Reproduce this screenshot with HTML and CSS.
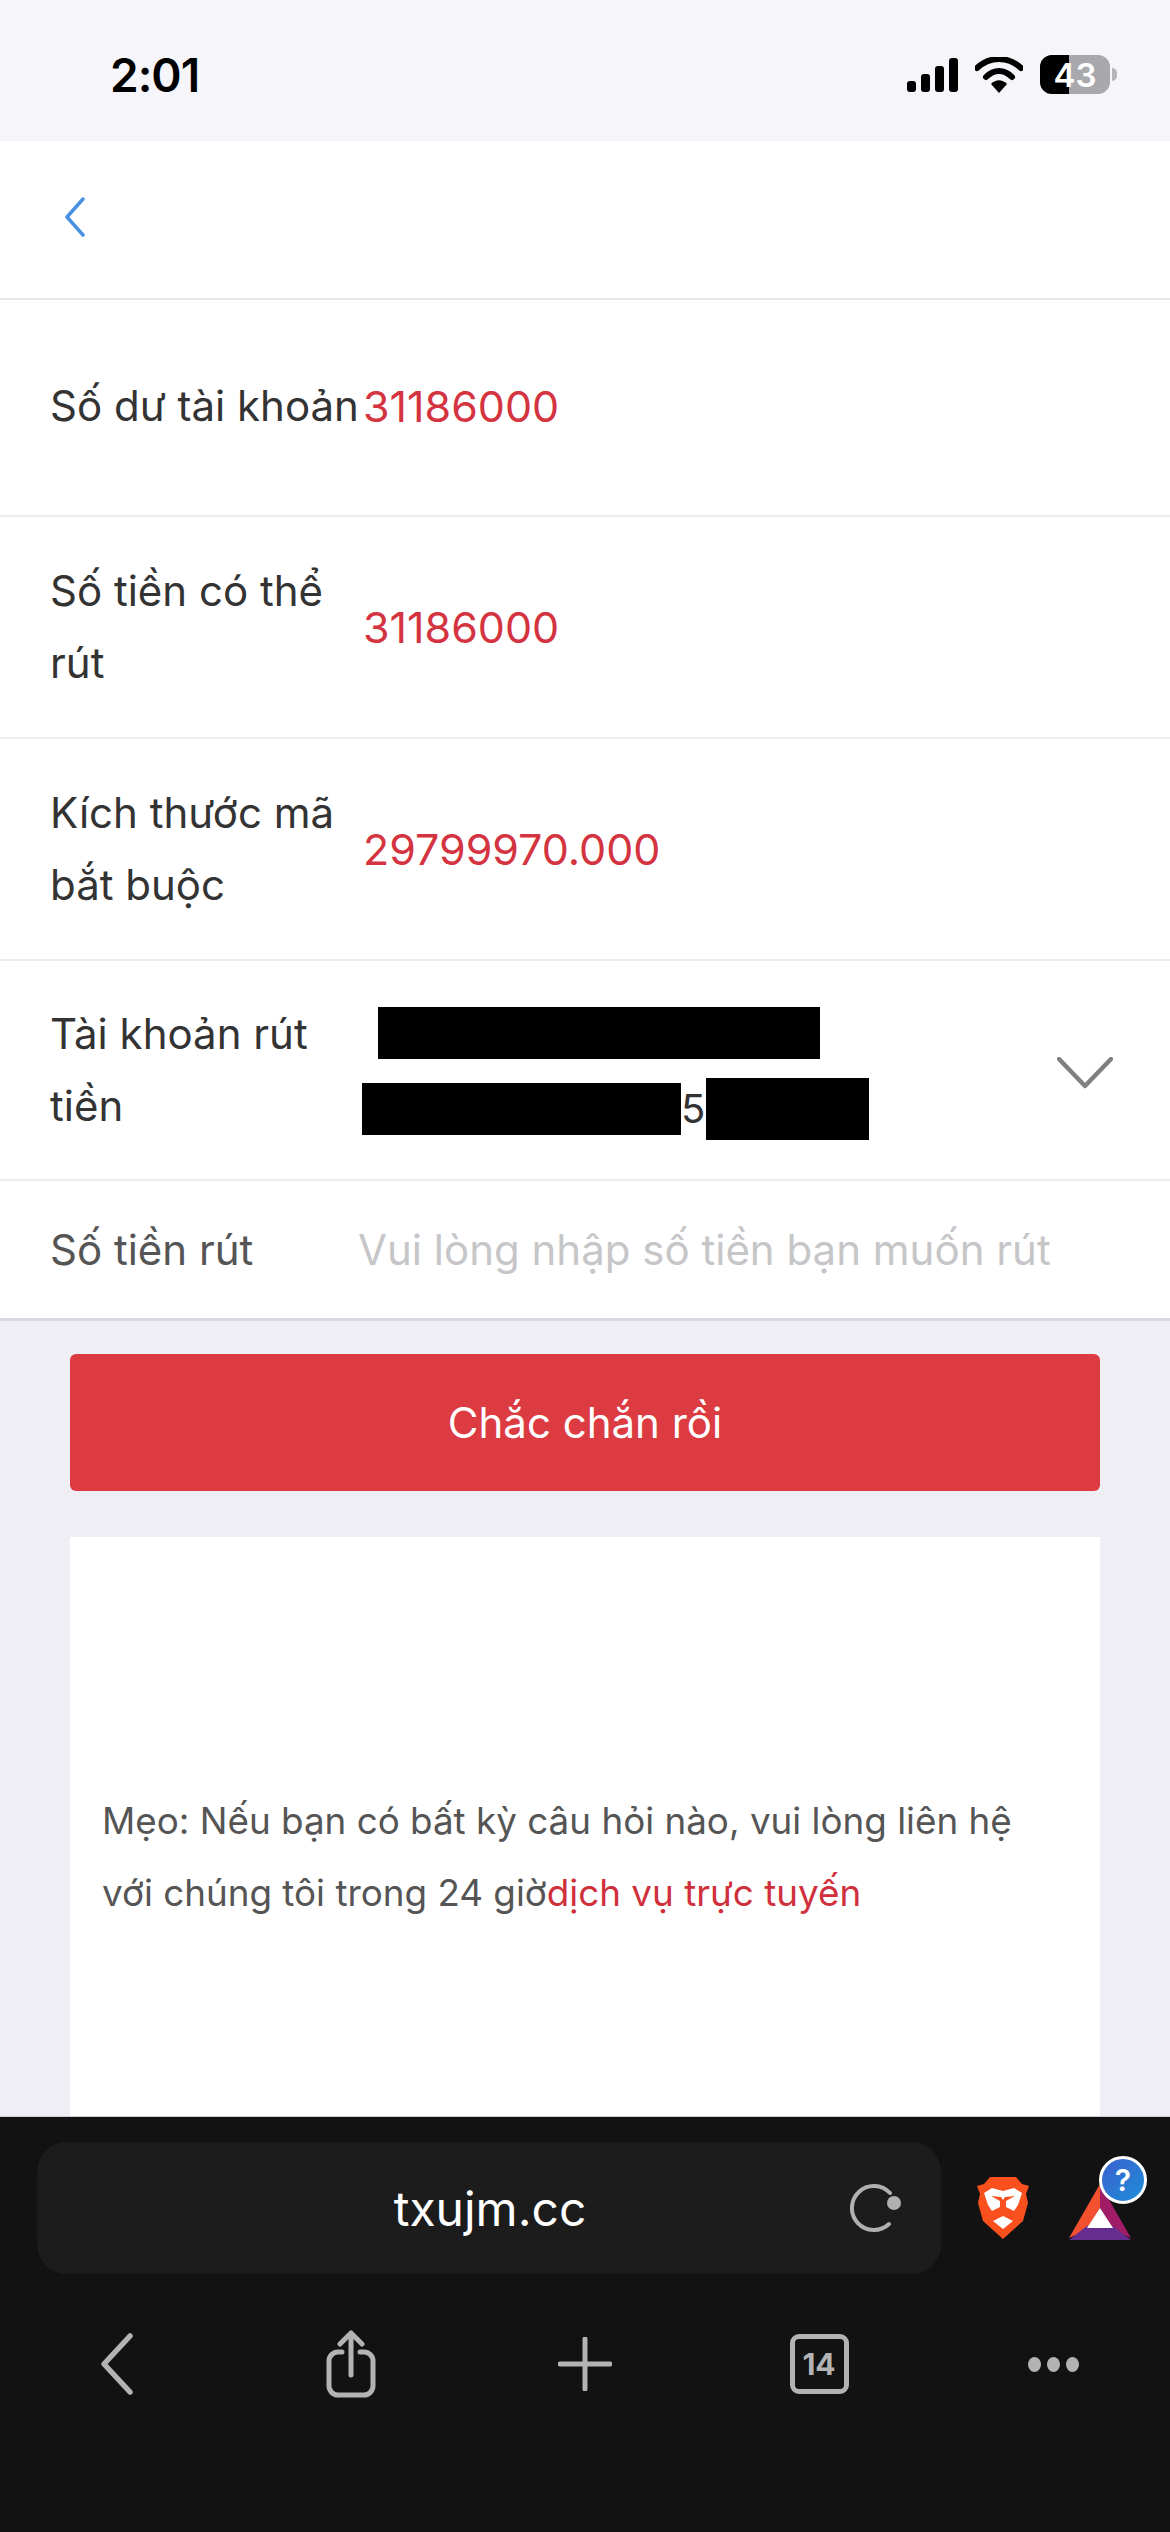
FILE: index.html
```html
<!DOCTYPE html>
<html lang="vi">
<head>
    <meta charset="UTF-8">
    <meta name="viewport" content="width=device-width, initial-scale=1.0">
    <title>Rút tiền</title>
    <link rel="stylesheet" href="styles.css">
</head>
<body>
    <div class="status-bar">
        <span class="time">2:01</span>
        <div class="status-icons">
            <svg class="icon-signal" width="51" height="34" viewBox="0 0 51 34">
                <rect x="0" y="23" width="9" height="11" rx="3"/>
                <rect x="14" y="16" width="9" height="18" rx="3"/>
                <rect x="28" y="8" width="9" height="26" rx="3"/>
                <rect x="42" y="0" width="9" height="34" rx="3"/>
            </svg>
            <svg class="icon-wifi" width="48" height="36" viewBox="0 0 48 36">
                <path d="M2 11 C15 -1 33 -1 46 11" fill="none" stroke="#000" stroke-width="6" stroke-linecap="round"/>
                <path d="M11 20 C19 12 29 12 37 20" fill="none" stroke="#000" stroke-width="6" stroke-linecap="round"/>
                <path d="M16 27 C21 22 27 22 32 27 L24 36 Z"/>
            </svg>
            <div class="battery">
                <div class="battery-body">
                    <div class="battery-fill"></div>
                    <span class="battery-num">43</span>
                </div>
                <div class="battery-nub"></div>
            </div>
        </div>
    </div>

    <main class="page">
        <header class="nav">
            <svg width="22" height="40" viewBox="0 0 22 40">
                <path d="M19 2 L3 20 L19 38" fill="none" stroke="#4a90e2" stroke-width="3.5" stroke-linecap="round" stroke-linejoin="round"/>
            </svg>
        </header>

        <section class="form">
            <div class="row row-first">
                <div class="label">Số dư tài khoản</div>
                <div class="value">31186000</div>
            </div>
            <div class="row row-tall">
                <div class="label">Số tiền có thể rút</div>
                <div class="value">31186000</div>
            </div>
            <div class="row row-tall">
                <div class="label">Kích thước mã bắt buộc</div>
                <div class="value">29799970.000</div>
            </div>
            <div class="row">
                <div class="label">Tài khoản rút tiền</div>
                <div class="account">
                    <div class="redact redact-top"></div>
                    <div class="account-line">
                        <div class="redact redact-left"></div>
                        <span class="account-digit">5</span>
                        <div class="redact redact-right"></div>
                    </div>
                </div>
                <svg class="chevron" width="56" height="32" viewBox="0 0 56 32">
                    <path d="M2 2 L28 29 L54 2" fill="none" stroke="#808080" stroke-width="4.5" stroke-linecap="round" stroke-linejoin="round"/>
                </svg>
            </div>
            <div class="row row-input">
                <div class="label label-muted">Số tiền rút</div>
                <div class="placeholder">Vui lòng nhập số tiền bạn muốn rút</div>
            </div>
        </section>

        <div class="content">
            <button class="submit-btn">Chắc chắn rồi</button>
            <div class="tip">
                Mẹo: Nếu bạn có bất kỳ câu hỏi nào, vui lòng liên hệ với chúng tôi trong 24 giờ<span class="tip-link">dịch vụ trực tuyến</span>
            </div>
        </div>
    </main>

    <footer class="browser">
        <div class="address-row">
            <div class="address">
                <span class="url">txujm.cc</span>
                <svg class="reload" width="52" height="50" viewBox="0 0 52 50">
                    <path d="M39 41 A22 22 0 1 1 40 10" fill="none" stroke="#b0b0b0" stroke-width="4" stroke-linecap="round"/>
                    <circle cx="44" cy="20" r="7" fill="#b0b0b0"/>
                </svg>
            </div>
            <svg class="brave" width="52" height="62" viewBox="0 0 52 62">
                <path d="M13 0 H39 L45 7 L52 9 L49 17 L51 26 L46 44 L26 62 L6 44 L1 26 L3 17 L0 9 L7 7 Z" fill="#f9501e"/>
                <path d="M7 16 L15 11 L26 14 L37 11 L45 16 L41 28 L37 34 L29 30 V24 L38 19 L28 20 L26 23 L24 20 L14 19 L23 24 V30 L15 34 L11 28 Z" fill="#fff"/>
                <path d="M26 39 L36 44 L26 52 L16 44 Z" fill="#fff"/>
            </svg>
            <div class="bat">
                <svg width="62" height="56" viewBox="0 0 62 56">
                    <path d="M31 0 L31 24 L18 46 L0 54 Z" fill="#f3502f"/>
                    <path d="M31 0 L62 54 L44 46 L31 24 Z" fill="#a01c66"/>
                    <path d="M0 56 L18 42 H44 L62 56 Z" fill="#662d91"/>
                    <path d="M31 24 L44 44 H18 Z" fill="#fff"/>
                </svg>
                <span class="badge">?</span>
            </div>
        </div>
        <nav class="toolbar">
            <svg width="34" height="64" viewBox="0 0 34 64">
                <path d="M30 4 L4 32 L30 60" fill="none" stroke="#b3b3b3" stroke-width="5.5" stroke-linecap="round" stroke-linejoin="round"/>
            </svg>
            <svg width="50" height="68" viewBox="0 0 50 68">
                <path d="M16 22 H12 A9 9 0 0 0 3 31 V56 A9 9 0 0 0 12 65 H38 A9 9 0 0 0 47 56 V31 A9 9 0 0 0 38 22 H34" fill="none" stroke="#b3b3b3" stroke-width="5" stroke-linecap="round"/>
                <path d="M25 45 V4 M14 14 L25 3 L36 14" fill="none" stroke="#b3b3b3" stroke-width="5" stroke-linecap="round" stroke-linejoin="round"/>
            </svg>
            <svg width="54" height="54" viewBox="0 0 54 54">
                <path d="M27 2 V52 M2 27 H52" fill="none" stroke="#b3b3b3" stroke-width="5" stroke-linecap="round"/>
            </svg>
            <div class="tabs">14</div>
            <div class="more"><i></i><i></i><i></i></div>
        </nav>
    </footer>
</body>
</html>
```

FILE: styles.css
```css
* {
    margin: 0;
    padding: 0;
    box-sizing: border-box;
    font-family: Inter, 'Liberation Sans', sans-serif;
}

html, body {
    width: 1170px;
    height: 2532px;
    overflow: hidden;
}

body {
    display: flex;
    flex-direction: column;
    background: #eeeef4;
}

/* status bar */
.status-bar {
    height: 141px;
    flex: none;
    background: #f6f6fa;
    display: flex;
    justify-content: space-between;
    align-items: center;
    padding: 0 53px 0 110px;
    color: #000;
}

.time {
    font-size: 46px;
    font-weight: 600;
    letter-spacing: -1px;
    margin-top: 8px;
}

.status-icons {
    display: flex;
    align-items: center;
    margin-top: 8px;
}

.icon-signal {
    margin-right: 17px;
}

.icon-wifi {
    margin-right: 17px;
}

.battery {
    display: flex;
    align-items: center;
}

.battery-body {
    width: 70px;
    height: 39px;
    border-radius: 12px;
    background: #a9a9ad;
    position: relative;
    overflow: hidden;
    display: flex;
    align-items: center;
    justify-content: center;
}

.battery-fill {
    position: absolute;
    left: 0;
    top: 0;
    bottom: 0;
    width: 29px;
    background: #000;
}

.battery-num {
    position: relative;
    color: #fff;
    font-size: 33px;
    font-weight: 600;
}

.battery-nub {
    width: 5px;
    height: 13px;
    margin-left: 2px;
    background: #b5b5b9;
    border-radius: 0 5px 5px 0;
}

/* page */
.page {
    flex: 1;
    min-height: 0;
    overflow: hidden;
    display: flex;
    flex-direction: column;
}

.nav {
    height: 159px;
    flex: none;
    background: #fff;
    border-bottom: 2px solid #e8e8e8;
    display: flex;
    align-items: center;
    padding: 0 0 6px 64px;
}

.form {
    flex: none;
    background: #fff;
    border-bottom: 3px solid #d8d8e0;
}

.row {
    height: 220px;
    display: flex;
    align-items: center;
    padding-left: 50px;
    border-bottom: 2px solid #ececec;
    font-size: 42px;
    line-height: 72px;
}

.row-first {
    height: 217px;
    padding-bottom: 4px;
}

.row-tall {
    height: 222px;
}

.row-input {
    height: 137px;
    border-bottom: none;
}

.label {
    width: 313px;
    flex: none;
    color: #333;
}

.label-muted {
    width: 308px;
    color: #555;
}

.value {
    color: #d4343f;
    font-size: 43px;
}

.account {
    display: flex;
    flex-direction: column;
    gap: 19px;
    margin: 6px 0 0 -1px;
}

.account-line {
    display: flex;
    align-items: center;
    height: 62px;
}

.account-digit {
    width: 25px;
    color: #333;
    font-size: 40px;
}

.redact {
    background: #000;
}

.redact-top {
    width: 442px;
    height: 52px;
    margin-left: 16px;
}

.redact-left {
    width: 319px;
    height: 52px;
}

.redact-right {
    width: 163px;
    height: 62px;
}

.chevron {
    margin: 6px 57px 0 auto;
}

.placeholder {
    color: #c6c6c8;
    white-space: nowrap;
}

.content {
    flex: 1;
    padding: 33px 70px 0;
}

.submit-btn {
    display: block;
    width: 100%;
    height: 137px;
    border: none;
    border-radius: 6px;
    background: #dc3b42;
    color: #fff;
    font-size: 42px;
}

.tip {
    margin-top: 46px;
    height: 800px;
    background: #fff;
    padding: 248px 50px 0 32px;
    font-size: 36.8px;
    line-height: 72px;
    color: #555;
}

.tip-link {
    color: #d0303c;
}

/* browser chrome */
.browser {
    height: 416px;
    flex: none;
    background: #121212;
    border-top: 1px solid #d0d0d4;
    padding-top: 25px;
}

.address-row {
    display: flex;
    align-items: center;
    height: 132px;
    padding-left: 37px;
}

.address {
    width: 904px;
    height: 132px;
    background: #1c1c1c;
    border-radius: 30px;
    display: flex;
    align-items: center;
    justify-content: center;
    position: relative;
}

.url {
    color: #fff;
    font-size: 48px;
    margin-left: 2px;
}

.reload {
    position: absolute;
    right: 39px;
    top: 41px;
}

.brave {
    margin-left: 36px;
}

.bat {
    position: relative;
    margin-left: 40px;
    width: 62px;
    height: 56px;
    margin-top: 8px;
}

.badge {
    position: absolute;
    left: 30px;
    top: -28px;
    width: 48px;
    height: 48px;
    border-radius: 50%;
    border: 3px solid #fff;
    background: linear-gradient(135deg, #3a5fcf, #1f8fd8);
    color: #fff;
    font-size: 30px;
    font-weight: 600;
    display: flex;
    align-items: center;
    justify-content: center;
}

.toolbar {
    display: grid;
    grid-template-columns: repeat(5, 234px);
    justify-items: center;
    align-items: center;
    height: 68px;
    margin-top: 56px;
}

.tabs {
    width: 59px;
    height: 60px;
    border: 5px solid #b3b3b3;
    border-radius: 9px;
    color: #b3b3b3;
    font-size: 30px;
    font-weight: 700;
    display: flex;
    align-items: center;
    justify-content: center;
}

.more {
    display: flex;
    gap: 6px;
}

.more i {
    width: 13px;
    height: 15px;
    border-radius: 50%;
    background: #b3b3b3;
}
```
